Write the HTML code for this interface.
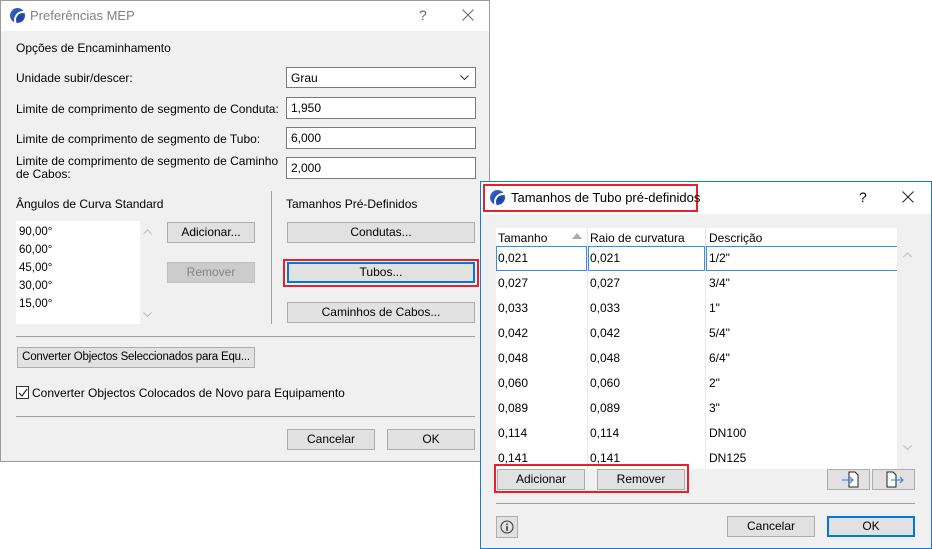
<!DOCTYPE html>
<html><head><meta charset="utf-8"><style>
*{box-sizing:border-box;margin:0;padding:0}
body{width:932px;height:549px;background:#fff;position:relative;overflow:hidden;font-family:"Liberation Sans",sans-serif;font-size:12px;color:#000}
.a{position:absolute;white-space:nowrap}
.btn{position:absolute;background:#e1e1e1;border:1px solid #adadad;text-align:center;line-height:19px;font-size:12px;white-space:nowrap;overflow:hidden}
.inp{position:absolute;background:#fff;border:1px solid #7a7a7a;padding-left:4px;line-height:20px}
.hr{position:absolute;height:1px;background:#a0a0a0}
.logo{position:absolute;width:15px;height:15px;border-radius:50%;background:radial-gradient(circle at 65% 65%,#1a3f9a,#3a6fd8);overflow:hidden}
.logo:after{content:"";position:absolute;left:4px;top:3px;width:14px;height:14px;border:2px solid #fff;border-radius:50%;border-right-color:transparent;border-bottom-color:transparent}
</style></head><body>
<!-- Dialog 1 -->
<div class="a" style="left:0;top:0;width:490px;height:462px;background:#f0f0f0;border:1px solid #9a9a9a"></div>
<div class="a" style="left:1px;top:1px;width:488px;height:30px;background:#fff"></div>
<div class="logo" style="left:10px;top:8px"></div>
<div class="a" style="left:30px;top:8px;font-size:13px;color:#808080">Preferências MEP</div>
<div class="a" style="left:419px;top:7px;font-size:14px;color:#666">?</div>
<svg class="a" style="left:462px;top:9px" width="12" height="12"><path d="M0.5 0.5L11.5 11.5M11.5 0.5L0.5 11.5" stroke="#666"/></svg>
<div class="a" style="left:16px;top:41px">Opções de Encaminhamento</div>
<div class="a" style="left:16px;top:71px">Unidade subir/descer:</div>
<div class="inp" style="left:286px;top:67px;width:190px;height:21px">Grau<svg style="position:absolute;right:6px;top:7px" width="9" height="6"><path d="M0.5 0.5L4.5 4.5L8.5 0.5" fill="none" stroke="#333"/></svg></div>
<div class="a" style="left:16px;top:102px">Limite de comprimento de segmento de Conduta:</div>
<div class="inp" style="left:286px;top:97px;width:190px;height:22px">1,950</div>
<div class="a" style="left:16px;top:132px">Limite de comprimento de segmento de Tubo:</div>
<div class="inp" style="left:286px;top:127px;width:190px;height:22px">6,000</div>
<div class="a" style="left:16px;top:155px;line-height:13px">Limite de comprimento de segmento de Caminho<br>de Cabos:</div>
<div class="inp" style="left:286px;top:157px;width:190px;height:22px">2,000</div>
<div class="a" style="left:271px;top:191px;width:1px;height:133px;background:#a0a0a0"></div>
<div class="a" style="left:16px;top:197px">Ângulos de Curva Standard</div>
<div class="a" style="left:16px;top:221px;width:124px;height:103px;background:#fff;padding:2px 0 0 3px;line-height:18px;font-size:11.5px">90,00°<br>60,00°<br>45,00°<br>30,00°<br>15,00°</div>
<svg class="a" style="left:143px;top:229px" width="9" height="6"><path d="M0.5 5L4.5 1L8.5 5" fill="none" stroke="#bbb"/></svg>
<svg class="a" style="left:143px;top:312px" width="9" height="6"><path d="M0.5 0.5L4.5 4.5L8.5 0.5" fill="none" stroke="#bbb"/></svg>
<div class="btn" style="left:167px;top:222px;width:88px;height:21px">Adicionar...</div>
<div class="btn" style="left:167px;top:262px;width:88px;height:21px;background:#ccc;border-color:#bfbfbf;color:#838383">Remover</div>
<div class="a" style="left:286px;top:197px">Tamanhos Pré-Definidos</div>
<div class="btn" style="left:287px;top:222px;width:188px;height:21px">Condutas...</div>
<div class="a" style="left:283px;top:259px;width:196px;height:28px;border:2px solid #e8202a"></div>
<div class="btn" style="left:287px;top:262px;width:188px;height:21px;border:2px solid #0078d7;line-height:17px">Tubos...</div>
<div class="btn" style="left:287px;top:302px;width:188px;height:21px">Caminhos de Cabos...</div>
<div class="hr" style="left:16px;top:336px;width:459px"></div>
<div class="btn" style="left:17px;top:347px;width:238px;height:21px;font-size:11.5px;letter-spacing:-0.2px">Converter Objectos Seleccionados para Equ...</div>
<div class="a" style="left:16px;top:386px;width:13px;height:13px;border:1px solid #333;background:#fff"><svg style="position:absolute;left:1px;top:1px" width="10" height="10"><path d="M1 5L4 8L9 1" fill="none" stroke="#222" stroke-width="1.2"/></svg></div>
<div class="a" style="left:32px;top:386px">Converter Objectos Colocados de Novo para Equipamento</div>
<div class="hr" style="left:16px;top:416px;width:459px"></div>
<div class="btn" style="left:287px;top:429px;width:88px;height:21px">Cancelar</div>
<div class="btn" style="left:387px;top:429px;width:88px;height:21px">OK</div>

<!-- Dialog 2 -->
<div class="a" style="left:480px;top:181px;width:452px;height:368px;background:#f0f0f0;border:1px solid #1a7ad0"></div>
<div class="a" style="left:481px;top:182px;width:450px;height:32px;background:#fff"></div>
<div class="a" style="left:483px;top:184px;width:215px;height:28px;border:2px solid #e8202a"></div>
<div class="logo" style="left:490px;top:190px"></div>
<div class="a" style="left:511px;top:190px;font-size:13px">Tamanhos de Tubo pré-definidos</div>
<div class="a" style="left:859px;top:189px;font-size:14px">?</div>
<svg class="a" style="left:902px;top:191px" width="12" height="12"><path d="M0.5 0.5L11.5 11.5M11.5 0.5L0.5 11.5" stroke="#222"/></svg>
<div class="a" style="left:496px;top:228px;width:401px;height:241px;background:#fff;overflow:hidden">
 <div class="a" style="left:2px;top:3px">Tamanho</div>
 <div class="a" style="left:76px;top:5px;width:0;height:0;border-left:5px solid transparent;border-right:5px solid transparent;border-bottom:6px solid #aaa"></div>
 <div class="a" style="left:91px;top:0;width:1px;height:18px;background:#e5e5e5"></div>
 <div class="a" style="left:94px;top:3px">Raio de curvatura</div>
 <div class="a" style="left:209px;top:0;width:1px;height:18px;background:#e5e5e5"></div>
 <div class="a" style="left:213px;top:3px">Descrição</div>
 <div class="a" style="left:91px;top:18px;width:1px;height:230px;background:#eaeaea"></div>
 <div class="a" style="left:209px;top:18px;width:1px;height:230px;background:#eaeaea"></div>
 <div class="a" style="left:0;top:18px;width:91px;height:25px;border:1px solid #3c8ddb"></div>
 <div class="a" style="left:92px;top:18px;width:117px;height:25px;border:1px solid #3c8ddb"></div>
 <div class="a" style="left:210px;top:18px;width:192px;height:25px;border:1px solid #3c8ddb"></div>
 <div class="a" style="left:2px;top:18px;line-height:25px">0,021<br>0,027<br>0,033<br>0,042<br>0,048<br>0,060<br>0,089<br>0,114<br>0,141</div>
 <div class="a" style="left:94px;top:18px;line-height:25px">0,021<br>0,027<br>0,033<br>0,042<br>0,048<br>0,060<br>0,089<br>0,114<br>0,141</div>
 <div class="a" style="left:213px;top:18px;line-height:25px">1/2"<br>3/4"<br>1"<br>5/4"<br>6/4"<br>2"<br>3"<br>DN100<br>DN125</div>
</div>
<svg class="a" style="left:903px;top:252px" width="9" height="6"><path d="M0.5 5L4.5 1L8.5 5" fill="none" stroke="#bbb"/></svg>
<svg class="a" style="left:903px;top:445px" width="9" height="6"><path d="M0.5 0.5L4.5 4.5L8.5 0.5" fill="none" stroke="#bbb"/></svg>
<div class="a" style="left:494px;top:464px;width:195px;height:29px;border:2px solid #e8202a"></div>
<div class="btn" style="left:497px;top:469px;width:88px;height:21px">Adicionar</div>
<div class="btn" style="left:597px;top:469px;width:88px;height:21px">Remover</div>
<div class="btn" style="left:827px;top:469px;width:43px;height:21px"><svg width="30" height="19" viewBox="0 0 30 19"><path d="M15 2h6l3 3v12h-9z" fill="#fff" stroke="#222"/><path d="M8 10h11M16 7l3 3-3 3" fill="none" stroke="#2a7ae2"/></svg></div>
<div class="btn" style="left:872px;top:469px;width:43px;height:21px"><svg width="30" height="19" viewBox="0 0 30 19"><path d="M8 2h6l3 3v12h-9z" fill="#fff" stroke="#222"/><path d="M12 10h12M21 7l3 3-3 3" fill="none" stroke="#2a7ae2"/></svg></div>
<div class="hr" style="left:496px;top:503px;width:419px"></div>
<div class="btn" style="left:496px;top:516px;width:22px;height:22px;line-height:18px"><svg width="14" height="14" viewBox="0 0 14 14" style="margin-top:3px"><circle cx="7" cy="7" r="6" fill="none" stroke="#333"/><path d="M7 6v5M7 3.5v1.5" stroke="#333" stroke-width="1.5"/></svg></div>
<div class="btn" style="left:727px;top:516px;width:88px;height:21px">Cancelar</div>
<div class="btn" style="left:827px;top:516px;width:88px;height:21px;border:2px solid #0078d7;line-height:17px">OK</div>
</body></html>
